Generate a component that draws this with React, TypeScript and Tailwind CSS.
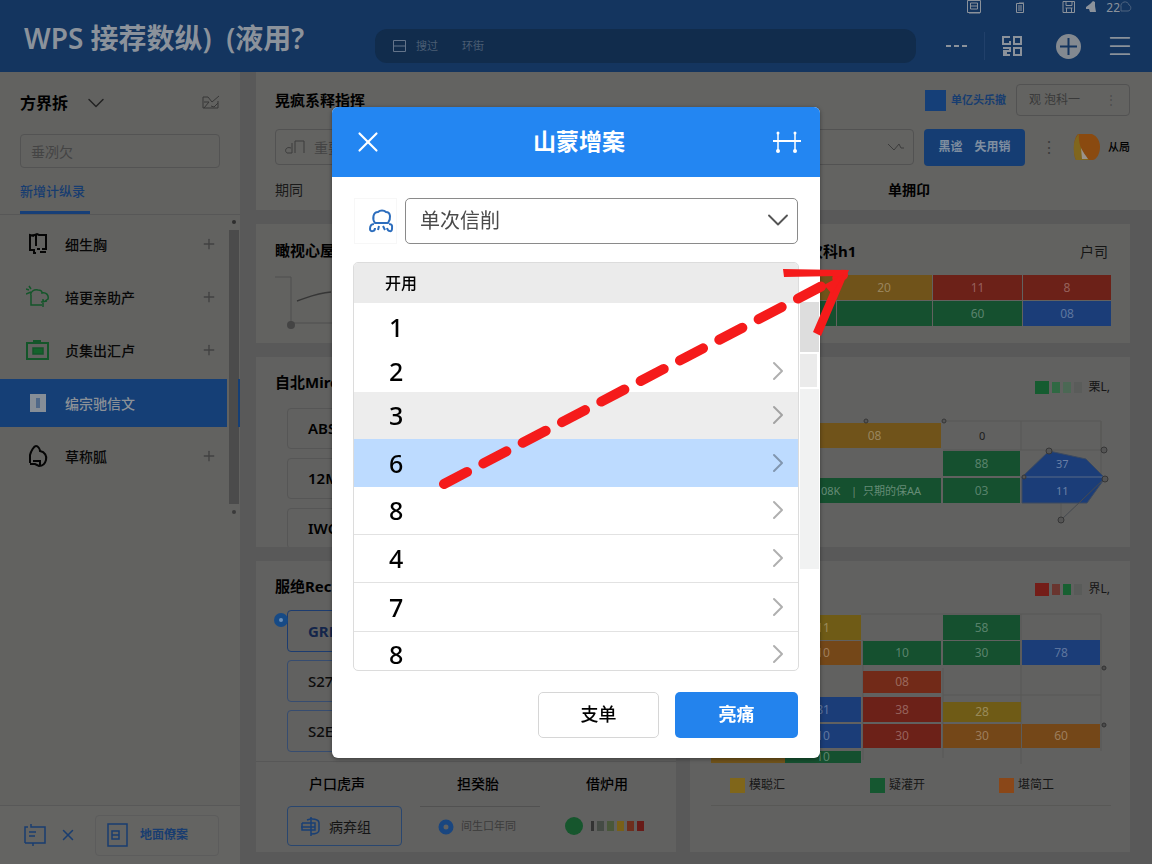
import { ChevronDown, ChevronRight, Menu, Plus, X } from "lucide-react";

type Cell = {
  x: number;
  y: number;
  w: number;
  h: number;
  fill: string;
  label?: string;
};

const GREEN = "#15502f";
const RED = "#6c2118";
const AMBER = "#70531a";
const YELLOW = "#6f5b16";
const ORANGE = "#744718";
const BLUE = "#1b3d78";

//////////////////////////////////////////////////////////////////////////////////////////////////////////

// Chart data

const summaryCells: Cell[] = [
  { x: 21, y: 3, w: 124, h: 25, fill: AMBER },
  { x: 146, y: 3, w: 96, h: 25, fill: AMBER, label: "20" },
  { x: 243, y: 3, w: 89, h: 25, fill: RED, label: "11" },
  { x: 333, y: 3, w: 88, h: 25, fill: RED, label: "8" },
  { x: 21, y: 29, w: 125, h: 25, fill: GREEN },
  { x: 147, y: 29, w: 95, h: 25, fill: GREEN },
  { x: 243, y: 29, w: 89, h: 25, fill: GREEN, label: "60" },
  { x: 333, y: 29, w: 88, h: 25, fill: BLUE, label: "08" },
];

const flowCells: Cell[] = [
  { x: 118, y: 6, w: 133, h: 25, fill: AMBER, label: "08" },
  { x: 253, y: 34, w: 77, h: 25, fill: GREEN, label: "88" },
  { x: 253, y: 61, w: 77, h: 25, fill: GREEN, label: "03" },
  { x: 21, y: 61, w: 230, h: 25, fill: GREEN },
];

const stackCells: Cell[] = [
  { x: 95, y: 4, w: 76, h: 25, fill: YELLOW, label: "11" },
  { x: 95, y: 30, w: 76, h: 24, fill: ORANGE, label: "10" },
  { x: 253, y: 4, w: 77, h: 25, fill: GREEN, label: "58" },
  { x: 173, y: 30, w: 78, h: 24, fill: GREEN, label: "10" },
  { x: 253, y: 30, w: 77, h: 24, fill: GREEN, label: "30" },
  { x: 332, y: 29, w: 78, h: 25, fill: BLUE, label: "78" },
  { x: 173, y: 60, w: 78, h: 22, fill: "#722a18", label: "08" },
  { x: 95, y: 86, w: 76, h: 25, fill: BLUE, label: "81" },
  { x: 173, y: 86, w: 78, h: 25, fill: RED, label: "38" },
  { x: 253, y: 91, w: 78, h: 20, fill: YELLOW, label: "28" },
  { x: 95, y: 113, w: 76, h: 24, fill: BLUE, label: "10" },
  { x: 173, y: 113, w: 78, h: 24, fill: RED, label: "30" },
  { x: 253, y: 113, w: 78, h: 24, fill: ORANGE, label: "30" },
  { x: 332, y: 113, w: 78, h: 24, fill: ORANGE, label: "60" },
  { x: 21, y: 140, w: 74, h: 12, fill: AMBER },
  { x: 95, y: 140, w: 76, h: 12, fill: GREEN, label: "10" },
];

const Cells = ({ cells }: { cells: Cell[] }) => (
  <>
    {cells.map((c) => (
      <g key={`${c.x}-${c.y}`}>
        <rect x={c.x} y={c.y} width={c.w} height={c.h} fill={c.fill} />
        {c.label && (
          <text
            x={c.x + c.w / 2}
            y={c.y + c.h / 2 + 4}
            fill="#fff"
            fillOpacity="0.3"
            fontSize="12"
            textAnchor="middle"
          >
            {c.label}
          </text>
        )}
      </g>
    ))}
  </>
);

//////////////////////////////////////////////////////////////////////////////////////////////////////////

// Header

const Header = () => (
  <header className="flex h-[72px] flex-col bg-[#14355f] text-[#8b929b]">
    <div className="flex h-5 items-start justify-end gap-[9px] pr-5">
      <svg width="16" height="14" viewBox="0 0 16 14" fill="none" stroke="currentColor" className="mr-6">
        <path d="M1.500 0.500h13v12h-13zM4.500 3h7v6h-7zM5 6h6M3 13h11" />
      </svg>
      <svg width="10" height="14" viewBox="0 0 10 14" fill="none" stroke="currentColor" className="mr-7">
        <path d="M1.500 3.500h7v9h-7zM3 6h4M3 8h4M3 10h4M4 3h5" />
      </svg>
      <svg width="14" height="14" viewBox="0 0 14 14" fill="none" stroke="currentColor">
        <path d="M1 1.500h11.500v11H1zM4 2v3.500h6V2M3.500 8h7M4.500 8v4M9.500 8v4" />
      </svg>
      <svg width="12" height="14" viewBox="0 0 12 14" fill="currentColor">
        <path d="M1 7 5 4l3-3 2 1v4l1 6H5L4 9H1z" />
      </svg>
      <div className="flex text-[12px] leading-4">
        22
        <svg width="12" height="14" viewBox="0 0 12 14" fill="none" stroke="#4e6480">
          <path d="M1 11V7a4 4 0 0 1 8-2c3 1 2 6-1 6z" />
        </svg>
      </div>
    </div>

    <div className="flex flex-1 items-center pr-[18px] pl-6">
      <h1 className="w-[351px] shrink-0 self-start text-[28px] leading-9 font-semibold whitespace-pre">
        WPS 接荐数纵){"  "}(液用?
      </h1>

      <div className="flex h-[34px] flex-1 items-center rounded-xl bg-[#112c4c] pl-[17px] text-[11px] text-[#4b5e74]">
        <svg width="15" height="14" viewBox="0 0 15 14" fill="none" stroke="#64748a">
          <path d="M1.500 1.500h12v11h-12zM1.500 7h12" />
        </svg>
        <span className="ml-[9px]">搜过</span>
        <span className="ml-6">环街</span>
      </div>

      <div className="ml-[30px] flex items-center">
        <button type="button" aria-label="更多">
          <svg width="22" height="4" viewBox="0 0 22 4" fill="currentColor">
            <path d="M0 1h5v2H0zM8 1h5v2H8zM16 1h5v2h-5z" />
          </svg>
        </button>
        <span className="mx-4 h-7 w-px bg-[#21406a]" />
        <button type="button" aria-label="应用">
          <svg width="22" height="22" viewBox="0 0 22 22" fill="none" stroke="currentColor" strokeWidth="2">
            <path d="M9 2H2v7h7V6M13 2h7v7h-7zM13 13h7v7h-7zM2 13h7v3H3v4h6M5 16v4" />
          </svg>
        </button>
        <button type="button" aria-label="新建" className="ml-8">
          <svg width="27" height="27" viewBox="0 0 27 27">
            <circle cx="13.500" cy="13.500" r="12.500" fill="#838990" />
            <path d="M13.500 5v17M5 13.500h17" stroke="#14355f" strokeWidth="2" />
          </svg>
        </button>
        <button type="button" aria-label="菜单" className="ml-6">
          <Menu size={28} strokeWidth={1.5} />
        </button>
      </div>
    </div>
  </header>
);

//////////////////////////////////////////////////////////////////////////////////////////////////////////

// Sidebar

const navItems = [
  {
    name: "细生胸",
    color: "#050505",
    icon: <path d="M8 4 4 3v15h4v3M10 3v11M6 4l5-2 2 1h7v14h-4M11 17h3M16 17h4M14 20h6M7 21h3" strokeWidth="2" />,
  },
  {
    name: "培更亲助产",
    color: "#14562a",
    icon: <path d="M5 10v10h11M5 10c-1-3 3-6 7-5 2 0 4 1 4 3 4-1 7 2 6 6l-3 2M0 4l3 1M3 1l2 3M0 9l5-2M15 17l6-1M17 14v8" />,
  },
  {
    name: "贞集出汇卢",
    color: "#14562a",
    icon: (
      <>
        <path d="M1 5h21v16H1zM8 5V3h6v2" strokeWidth="2" />
        <path d="M7 10h10v6H7z" fill="#14632c" />
      </>
    ),
  },
  {
    name: "编宗驰信文",
    color: "#878d94",
    active: true,
    icon: (
      <>
        <path d="M4 3h16v18H4z" fill="#868e97" stroke="none" />
        <path d="M12 7v10" stroke="#4f6888" strokeWidth="4" />
      </>
    ),
  },
  {
    name: "草称胍",
    color: "#050505",
    icon: <path d="M4 19V11c1-4 4-9 6-9s4 3 4 5c5 1 7 5 6 9-1 4-3 6-7 6l-4-2H4M7 17h7v4" strokeWidth="2" />,
  },
];

const Sidebar = () => (
  <aside className="flex w-60 shrink-0 flex-col bg-[#626260]">
    <div className="border-b border-[#575757] px-5">
      <div className="flex h-[62px] items-center">
        <h2 className="text-[16px] font-bold">方界拆</h2>
        <ChevronDown size={28} strokeWidth={1.25} className="ml-[14px] text-[#222]" />
        <svg width="18" height="16" viewBox="0 0 18 16" fill="none" stroke="#373737" className="ml-auto">
          <path d="M1 2h5l4 5L17 1M1 2v11h15V6M2 13l5-6H2M9 11l3 1 4-4" />
        </svg>
      </div>
      <input
        aria-label="搜索"
        placeholder="垂冽欠"
        className="h-[34px] w-full rounded border border-[#535353] px-[10px] text-[14px] placeholder:text-[#444]"
      />
      <a href="#" className="mt-[5px] block w-[70px] border-b-[3px] border-[#173f78] pb-[2px] text-[13px] leading-9 font-medium text-[#163c70]">
        新增计纵录
      </a>
    </div>

    <div className="flex">
      <nav className="flex flex-1 flex-col gap-[5px] pt-[5px]">
        {navItems.map((item) => (
          <a
            key={item.name}
            href="#"
            className={`relative flex h-12 items-center pr-[10px] pl-[26px] ${
              item.active ? "bg-[#153f76] text-[#8b9197]" : "text-[#080808]"
            }`}
          >
            <svg width="24" height="24" viewBox="0 0 24 24" fill="none" stroke={item.color} strokeWidth="1.500">
              {item.icon}
            </svg>
            <span className="ml-[15px] text-[14px] font-medium">{item.name}</span>
            {item.active ? (
              <span className="absolute top-0 right-[-13px] h-full w-[2px] bg-[#153f76]" />
            ) : (
              <Plus size={16} strokeWidth={2} className="ml-auto text-[#414141]" />
            )}
          </a>
        ))}
      </nav>
      <div className="flex w-[13px] flex-col items-center gap-[6px] pt-[5px]">
        <span className="h-1 w-1 rounded-full bg-[#2e2e2e]" />
        <span className="h-[274px] w-[10px] bg-[#4b4b4b]" />
        <span className="h-1 w-1 rounded-full bg-[#3a3a3a]" />
      </div>
    </div>

    <div className="mt-auto flex h-[59px] items-center border-t border-[#585858] bg-[#646462] pl-6 text-[#193d70]">
      <svg width="22" height="24" viewBox="0 0 22 24" fill="none" stroke="currentColor" strokeWidth="1.500">
        <path d="M7 1v3h14v16H9M1 20V4h3M1 20h8v3M5 9h7M5 13h6" />
      </svg>
      <X size={18} className="ml-[13px]" />
      <button type="button" className="ml-[18px] flex h-[41px] w-[124px] items-center rounded border border-[#5c5c5c] pl-[11px]">
        <svg width="22" height="24" viewBox="0 0 22 24" fill="none" stroke="currentColor" strokeWidth="1.500">
          <path d="M1 1h19v22H1zM5 8h7v8H5zM5 12h7" />
        </svg>
        <span className="ml-[11px] text-[12px] font-bold">地面僚案</span>
      </button>
    </div>
  </aside>
);

//////////////////////////////////////////////////////////////////////////////////////////////////////////

// Dashboard

const Toolbar = () => (
  <section className="h-[138px] bg-[#636361] pr-[22px] pl-[19px]">
    <div className="flex h-14 items-center">
      <h2 className="flex-1 text-[15px] font-bold">晃疯系释指挥</h2>
      <span className="h-[21px] w-[21px] bg-[#153f78]" />
      <a href="#" className="mr-[10px] ml-[5px] text-[11px] font-bold text-[#173d70]">
        单亿头乐撤
      </a>
      <button type="button" className="flex h-8 w-[114px] items-center rounded border border-[#525252] px-3 text-[12px] text-[#3a3a3a]">
        观 泡科一 <span className="ml-auto text-[#4c4c4c]">⋮</span>
      </button>
    </div>

    <div className="flex h-[38px] items-center">
      <div className="flex h-9 flex-1 items-center rounded border border-[#525252] px-2 text-[#3c3c3c]">
        <svg width="22" height="16" viewBox="0 0 22 16" fill="none" stroke="currentColor">
          <path d="M8 4v10H3c-3-2-1-7 4-5M11 14V2h9v12" />
        </svg>
        <input aria-label="筛选" placeholder="重要" className="ml-2 min-w-0 flex-1 text-[14px] placeholder:text-[#444]" />
        <svg width="18" height="10" viewBox="0 0 18 10" fill="none" stroke="currentColor">
          <path d="m1 2 6 6 5-6 2 4h3" />
        </svg>
      </div>
      <button type="button" className="ml-[10px] flex h-[37px] w-[101px] items-center justify-center gap-3 rounded bg-[#153d73] text-[12px] font-bold text-[#7f8ea0]">
        <span>黑谧</span>
        <span>失用销</span>
      </button>
      <span className="ml-4 w-4 text-center text-[16px] text-[#3c3c3c]">⋮</span>
      <svg width="28" height="28" viewBox="0 0 28 28" className="ml-4">
        <path d="M5 1h14c5 2 8 7 8 13s-3 12-7 13H3C0 22 0 5 5 1z" fill="#8a4a10" />
        <path d="M6 1c-7 6-6 20-3 26h13C8 19 5 9 6 1z" fill="#80661d" />
        <path d="M8 15c2 4 5 8 7 11H9z" fill="#9a938a" />
      </svg>
      <span className="ml-[7px] text-[11px] font-medium">从局</span>
    </div>

    <div className="flex h-[46px] items-center text-[14px]">
      <span className="flex-1 text-[#1a1a1a]">期同</span>
      <span className="mr-[200px] font-bold">单拥卬</span>
    </div>
  </section>
);

const Swatches = ({ colors, text }: { colors: string[]; text: string }) => (
  <div className="flex items-center gap-[3px] text-[12px] text-[#161616]">
    {colors.map((color, i) => (
      <span key={i} className={i === 0 ? "h-[13px] w-[14px]" : "h-[11px] w-2"} style={{ background: color }} />
    ))}
    <span className="ml-[3px]">{text}</span>
  </div>
);

const SummaryCard = () => (
  <section className="grid h-[119px] grid-cols-[434fr_440fr] bg-[#626260]">
    <div className="pl-[19px]">
      <h2 className="text-[15px] leading-[52px] font-bold">瞰视心屋</h2>
      <svg width="80" height="54" viewBox="0 0 80 54" fill="none" stroke="#4f4f4f">
        <path d="M0 1h16v46h64" />
        <path d="M22 25c12-4 20-8 34-9" stroke="#363636" strokeWidth="1.500" />
        <circle cx="16" cy="49" r="4" fill="#444" stroke="none" />
      </svg>
    </div>
    <div>
      <div className="flex h-12 items-center justify-between pt-[6px] pr-[22px] pl-[118px]">
        <h2 className="text-[15px] font-bold">次科h1</h2>
        <span className="text-[14px] text-[#151515]">户司</span>
      </div>
      <svg viewBox="0 0 440 60" className="w-full">
        <Cells cells={summaryCells} />
      </svg>
    </div>
  </section>
);

const FlowCard = () => (
  <section className="grid h-[190px] grid-cols-[434fr_440fr] overflow-hidden bg-[#616160]">
    <div className="pl-[19px]">
      <h2 className="text-[15px] leading-[51px] font-bold">自北Mire</h2>
      <ul className="flex flex-col gap-[9px] pl-3 text-[15px] font-semibold">
        {["ABS", "12M", "IWC"].map((name) => (
          <li key={name} className="h-[41px] w-[340px] shrink-0 rounded border border-[#565656] pl-5 leading-[38px]">
            {name}
          </li>
        ))}
      </ul>
    </div>
    <div>
      <div className="flex h-[60px] items-center justify-end pr-5">
        <Swatches colors={["#155c30", "#2f6943", "#4b6854", "#5a5c5a"]} text="栗L," />
      </div>
      <svg viewBox="0 0 440 130" className="w-full">
        <path d="M253 4h158v29H253M331 4v29M411 4v56M371 86v17" fill="none" stroke="#585856" />
        <Cells cells={flowCells} />
        <path d="M332 60 359 34l37 8 19 19-18 25h-65z" fill={BLUE} stroke="#3c4a60" />
        <path d="M332 60h83" stroke="#596a86" />
        <path d="m371 103 43-41" stroke="#464a50" />
        <g fill="#555" stroke="#363636">
          <circle cx="414" cy="33" r="3" />
          <circle cx="359" cy="34" r="3" />
          <circle cx="415" cy="62" r="3" />
          <circle cx="371" cy="103" r="3" />
          <circle cx="176" cy="4" r="2" />
          <circle cx="254" cy="4" r="2" />
          <circle cx="334" cy="60" r="2" />
        </g>
        <g fill="#fff" fillOpacity="0.35" fontSize="11">
          <text x="131" y="78">08K</text>
          <text x="161" y="78">|</text>
          <text x="173" y="78">只期的保AA</text>
          <text x="366" y="51">37</text>
          <text x="366" y="78">11</text>
          <text x="289" y="23" fill="#1c1c1c" fillOpacity="1">0</text>
        </g>
      </svg>
    </div>
  </section>
);

const RecordCard = () => (
  <section className="bg-[#616160]">
    <div className="h-[201px] border-b border-[#575757] pt-[2px] pl-[19px]">
      <h2 className="text-[15px] leading-[47px] font-bold">服绝Rec</h2>
      <ul className="flex flex-col gap-2 pl-3 text-[15px] font-medium">
        {["GRE", "S27", "S2E"].map((name, i) => (
          <li
            key={name}
            className={`relative h-[42px] w-[340px] rounded border pl-5 leading-10 ${
              i === 0 ? "border-[#1c3c70] font-bold text-[#13254a]" : "border-[#364c70] text-[#0c0c0c]"
            }`}
          >
            {i === 0 && (
              <span className="absolute top-[2px] left-[-14px] flex h-[14px] w-[14px] items-center justify-center rounded-full bg-[#164a86]">
                <span className="h-1 w-1 rounded-full bg-[#6a8db5]" />
              </span>
            )}
            {name}
          </li>
        ))}
      </ul>
    </div>

    <div className="flex gap-[18px] pr-[22px] pl-[31px]">
      <div className="w-[115px]">
        <p className="h-11 pl-[22px] text-[14px] leading-[44px] font-medium">户口虎声</p>
        <button type="button" className="flex h-10 w-full items-center rounded border border-[#29466f] pl-3 text-[14px] text-[#141414]">
          <svg width="21" height="21" viewBox="0 0 21 21" fill="none" stroke="#193f74" strokeWidth="1.500">
            <path d="M11 1v19M2 7v7h13V7H2M1 11h14M7 4c5-2 12-1 12 3v7c0 3-4 4-8 4" />
          </svg>
          <span className="ml-2">病弃组</span>
        </button>
      </div>
      <div className="w-[120px]">
        <p className="h-11 pl-[37px] text-[14px] leading-[44px] font-medium">担癸胎</p>
        <div className="flex h-10 items-center border-t border-[#515151] pl-[18px] text-[11px] text-[#3b3b3b]">
          <svg width="16" height="16" viewBox="0 0 16 16" fill="none" stroke="#194680" strokeWidth="5">
            <circle cx="8" cy="8" r="5" />
          </svg>
          <span className="ml-[7px]">间生口年同</span>
        </div>
      </div>
      <div className="flex-1">
        <p className="h-11 pl-7 text-[14px] leading-[44px] font-medium">借炉用</p>
        <div className="flex h-10 items-center gap-[3px] pl-[7px]">
          <span className="mr-[5px] h-[18px] w-[18px] rounded-full bg-[#16562d]" />
          {["#333", "#454b45", "#49573a", "#796018", "#6e2e1d", "#681b18"].map((color, i) => (
            <span key={color} className={i === 0 ? "h-[10px] w-[3px]" : "h-[10px] w-[7px]"} style={{ background: color }} />
          ))}
        </div>
      </div>
    </div>
  </section>
);

const legend = [
  { name: "模聪汇", color: "#80661a" },
  { name: "疑灌开", color: "#155730" },
  { name: "堪简工", color: "#8a4718" },
];

const StackCard = () => (
  <section className="bg-[#616160]">
    <div className="flex h-[50px] items-center justify-end pt-[6px] pr-5">
      <Swatches colors={["#741d18", "#69352f", "#176031", "#595b59"]} text="界L," />
    </div>
    <svg viewBox="0 0 440 154" className="w-full">
      <path d="M171 3h240v137M331 3v150M253 84h158M173 29v120M253 57v90" fill="none" stroke="#595957" />
      <Cells cells={stackCells} />
      <circle cx="414" cy="57" r="2" fill="#4b4b4b" stroke="#333" />
      <circle cx="414" cy="114" r="2" fill="#4b4b4b" stroke="#333" />
    </svg>
    <div className="mr-[19px] ml-[21px] grid h-[41px] grid-cols-[140fr_129fr_131fr] items-center border-b border-[#585856] text-[12px] text-[#161616]">
      {legend.map((item) => (
        <span key={item.name} className="flex items-center gap-1 pl-[19px] whitespace-nowrap">
          <span className="h-[15px] w-[15px]" style={{ background: item.color }} />
          {item.name}
        </span>
      ))}
    </div>
  </section>
);

//////////////////////////////////////////////////////////////////////////////////////////////////////////

// Dialog

const rows = [
  { value: "1", style: "h-12 items-center", plain: true },
  { value: "2", style: "h-[41px] items-center" },
  { value: "3", style: "h-[47px] items-center bg-[#ededed]" },
  { value: "6", style: "h-12 items-center bg-[#bddbff]" },
  { value: "8", style: "h-12 items-center border-b border-[#e2e2e2]" },
  { value: "4", style: "h-12 items-center border-b border-[#e2e2e2]" },
  { value: "7", style: "h-[49px] items-center border-b border-[#e2e2e2]" },
  { value: "8", style: "h-[38px] items-end" },
];

const Dialog = () => (
  <div className="fixed inset-0 flex items-center justify-center">
    <div role="dialog" aria-labelledby="dialog-title" className="relative w-[488px] rounded-md bg-white shadow-[0_1px_4px_rgba(0,0,0,0.4)]">
      <div className="flex h-[70px] items-center justify-between rounded-t-md bg-[#2386f2] px-[19px] text-white">
        <button type="button" aria-label="关闭">
          <X size={34} strokeWidth={1.5} />
        </button>
        <h2 id="dialog-title" className="text-[23px] font-bold">
          山蒙增案
        </h2>
        <button type="button" aria-label="调整">
          <svg width="28" height="24" viewBox="0 0 28 24" fill="none" stroke="currentColor" strokeWidth="1.500">
            <path d="M0 11h28" strokeWidth="2" />
            <path d="M5 2v20M22 2v20" />
            <g fill="currentColor" stroke="none">
              <circle cx="5" cy="3" r="1.500" />
              <circle cx="5" cy="21" r="2" />
              <circle cx="22" cy="3" r="1.500" />
              <circle cx="22" cy="21" r="2" />
            </g>
          </svg>
        </button>
      </div>

      <div className="flex gap-2 px-[22px] pt-[21px] pb-[18px]">
        <div className="flex h-[46px] w-[43px] items-center justify-end border border-[#f7f7f7]">
          <svg width="30" height="26" viewBox="0 0 30 26" fill="none" stroke="#2c6dbd" strokeWidth="2">
            <path d="M9 15c-3-4-2-11 3-11 2-2 6-2 8 0 5 0 5 7 2 11zM8 16c-4 0-4 3-4 5 0 3 5 3 5-1M23 16c4 0 3 3 3 5 0 3-4 3-5-1M13 18l-1 4M17 18l2 4" />
          </svg>
        </div>
        <div className="relative flex-1">
          <select aria-label="选择" className="h-[46px] w-full appearance-none rounded-[5px] border border-[#8a8a8a] bg-white pl-[14px] text-[20px] text-[#4a4a4a]">
            <option>单次信削</option>
          </select>
          <ChevronDown size={36} strokeWidth={1.25} className="pointer-events-none absolute top-1 right-[2px] text-[#555]" />
        </div>
      </div>

      <div className="flex pr-[1px] pl-[21px]">
        <div className="h-[409px] flex-1 overflow-hidden rounded-[5px] border border-[#dcdcdc]">
          <div className="h-10 bg-[#ebebeb] pl-[31px] text-[16px] leading-10 font-medium">开用</div>
          <ul>
            {rows.map((row, i) => (
              <li key={i} className={`flex justify-between pr-1 pl-[35px] text-[25px] leading-8 font-medium ${row.style}`}>
                {row.value}
                {!row.plain && <ChevronRight size={32} strokeWidth={1.5} className="text-[#00000050]" />}
              </li>
            ))}
          </ul>
        </div>
        <div className="mt-10 flex w-5 flex-col gap-[2px] pl-[1px]">
          <span className="h-[50px] bg-[#dddddd]" />
          <span className="mr-[2px] h-[33px] bg-[#ebebeb]" />
          <span className="h-[180px] bg-[#f1f2f2]" />
        </div>
      </div>

      <div className="flex justify-end gap-4 px-[22px] pt-[21px] pb-5 text-[18px]">
        <button type="button" className="h-[46px] w-[121px] rounded-[5px] border border-[#d6d6d6] font-medium">
          支单
        </button>
        <button type="button" className="h-[46px] w-[123px] rounded-[5px] bg-[#2383ed] font-bold text-white">
          亮痛
        </button>
      </div>

      {/* Arrow pointing out of the list */}
      <svg viewBox="0 0 488 650" className="pointer-events-none absolute inset-0 w-full overflow-visible" fill="none" stroke="#f51b1b">
        <path d="M112 377 511 168" strokeWidth="10" strokeLinecap="round" strokeDasharray="26 18.400" />
        <path d="M451 162l66 1-28 66-8-4 19-44 6-12-54 1z" fill="#f51b1b" stroke="none" />
        <path d="m492 178 20-11-12 20z" fill="#f51b1b" stroke="none" />
      </svg>
    </div>
  </div>
);

export default function App() {
  return (
    <div className="flex min-h-screen flex-col bg-[#595959] font-['Noto_Sans','Noto_Sans_CJK_SC',sans-serif] text-black">
      <Header />
      <div className="flex flex-1">
        <Sidebar />
        <main className="flex min-w-0 flex-1 flex-col gap-[14px] pb-3 pl-4">
          <Toolbar />
          <div className="flex flex-1 flex-col gap-[14px] pr-[22px]">
            <SummaryCard />
            <FlowCard />
            <div className="grid flex-1 grid-cols-[420fr_440fr] gap-[14px]">
              <RecordCard />
              <StackCard />
            </div>
          </div>
        </main>
      </div>
      <Dialog />
    </div>
  );
}
